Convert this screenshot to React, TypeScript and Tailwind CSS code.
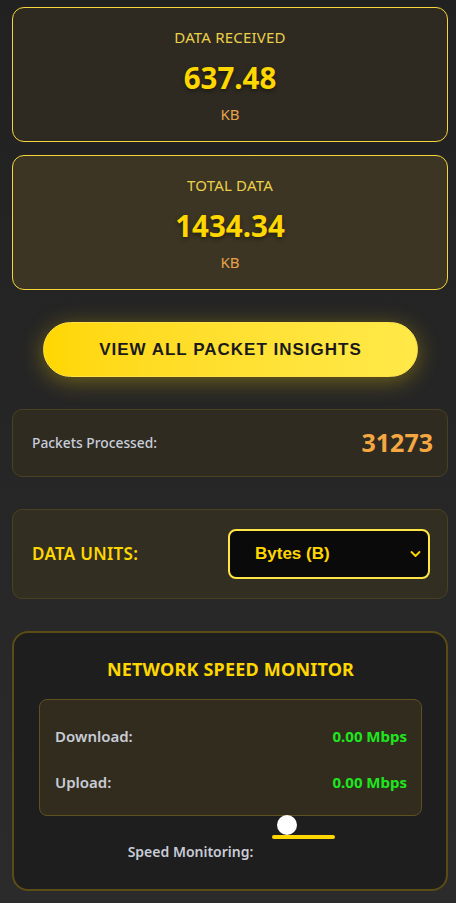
import React from "react";

const sans = { fontFamily: '"Noto Sans", "Open Sans", sans-serif' };

function StatCard({ title, value, unit, bg }: { title: string; value: string; unit: string; bg: string }) {
  return (
    <div className={`rounded-[12px] border border-[#f5d63a] ${bg} pt-[19px] pb-[17px] flex flex-col items-center`}>
      <div className="text-[15px] leading-[20px] text-[#ecd04a] tracking-[0.2px]">{title}</div>
      <div className="mt-[13px] text-[29.5px] leading-[36px] font-bold text-[#ffd700] [text-shadow:0_2px_4px_rgba(0,0,0,0.45)]">{value}</div>
      <div className="mt-[8px] text-[15px] leading-[20px] text-[#e8a24a]">{unit}</div>
    </div>
  );
}

export default function App() {
  return (
    <div style={sans} className="min-h-[903px] w-full bg-gradient-to-b from-[#212121] to-[#2b2b2b] pl-3 pr-2 pt-[7px] pb-[13px]">
      <div className="flex flex-col gap-[13px]">
        <StatCard title="DATA RECEIVED" value="637.48" unit="KB" bg="bg-[#2e2a21]" />
        <StatCard title="TOTAL DATA" value="1434.34" unit="KB" bg="bg-[#3c3523]" />
      </div>

      <div className="mt-[32px] flex justify-center pl-[1px]">
        <button
          className="w-[375px] h-[55px] rounded-full bg-gradient-to-r from-[#ffd700] to-[#ffe948] border border-[#ffe24a] shadow-[0_4px_22px_rgba(255,215,0,0.35)] text-[#1a1a1a] text-[17px] font-bold tracking-[1px]"
          style={{ fontFamily: '"Liberation Sans", Arial, sans-serif' }}
        >
          VIEW ALL PACKET INSIGHTS
        </button>
      </div>

      <div className="mt-[32px] h-[68px] rounded-[10px] border border-[#4a4120] bg-[#2f2b21] pl-[19px] pr-[14px] flex items-center justify-between">
        <span className="text-[13.8px] font-medium text-[#c8cedb]">Packets Processed:</span>
        <span className="text-[25px] font-bold text-[#f5a742]">31273</span>
      </div>

      <div className="mt-[32px] h-[90px] rounded-[10px] border border-[#4a4120] bg-[#332e22] pl-[19px] pr-[17px] flex items-center justify-between">
        <span className="text-[17px] font-semibold text-[#ffd700] tracking-[0.3px]">DATA UNITS:</span>
        <div className="relative w-[202px] h-[50px] rounded-[8px] border-2 border-[#ffe545] bg-[#0a0a0a] flex items-center pl-[25px]">
          <span className="text-[17px] font-bold text-[#ffd700]" style={{ fontFamily: '"Liberation Sans", Arial, sans-serif' }}>
            Bytes (B)
          </span>
          <svg className="absolute right-[7px] top-[19px]" width="11" height="8" viewBox="0 0 11 8" fill="none">
            <path d="M1.5 2l4 4 4-4" stroke="#ffd700" strokeWidth="1.8" strokeLinecap="round" strokeLinejoin="round" />
          </svg>
        </div>
      </div>

      <div className="mt-[32px] rounded-[16px] border-2 border-[#5a4c14] bg-[#1e1e1e] pt-[24px] pb-[27px] pl-[25px] pr-[24px]">
        <div className="text-center text-[18px] leading-[24px] font-bold text-[#ffd700] tracking-[0.2px]">NETWORK SPEED MONITOR</div>
        <div className="mt-[18px] rounded-[8px] border border-[#5e5020] bg-[#322c1e] pl-[15px] pr-[14px] pt-[26px] pb-[23px] flex flex-col gap-[26px]">
          <div className="flex justify-between items-center h-[20px]">
            <span className="text-[15px] font-semibold text-[#c8ccd6]">Download:</span>
            <span className="text-[15px] font-bold text-[#1ee61e]">0.00 Mbps</span>
          </div>
          <div className="flex justify-between items-center h-[20px]">
            <span className="text-[15px] font-semibold text-[#c8ccd6]">Upload:</span>
            <span className="text-[15px] font-bold text-[#1ee61e]">0.00 Mbps</span>
          </div>
        </div>
        <div className="-mt-[1px] flex justify-center items-start gap-[19px] pl-[2px]">
          <span className="mt-[27px] text-[14px] leading-[20px] font-semibold text-[#c8ccd6]">Speed Monitoring:</span>
          <div className="w-[63px] flex flex-col">
            <div className="ml-[5px] w-[20px] h-[20px] rounded-full bg-white" />
            <div className="h-[4px] rounded-full bg-[#ffd700]" />
          </div>
        </div>
      </div>
    </div>
  );
}
